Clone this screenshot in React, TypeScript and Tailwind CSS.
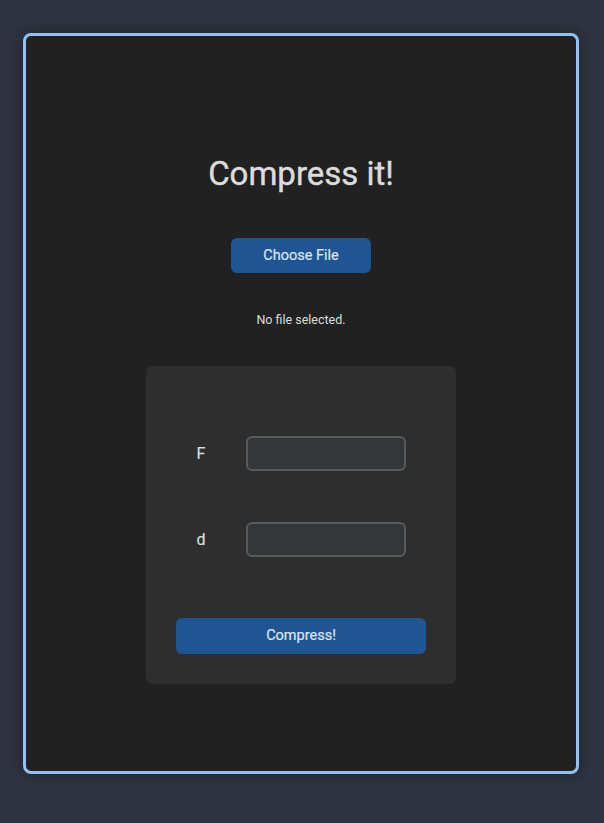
export default function App() {
  return (
    <div
      className="min-h-[823px] w-full bg-[#2e3440] pt-[33px] px-[23px]"
      style={{ fontFamily: 'Roboto, "Noto Sans", sans-serif' }}
    >
      <div className="h-[741px] w-[556px] rounded-[8px] border-[3px] border-[#93c1f0] bg-[#212121] shadow-[0_0_16px_rgba(0,0,0,0.35)] flex flex-col items-center">
        <h1 className="mt-[118px] text-[33px] leading-[40px] font-normal text-[#dcdcdc] [-webkit-text-stroke:0.4px_#dcdcdc]">
          Compress it!
        </h1>

        <button className="mt-[44px] h-[35px] w-[140px] rounded-[6px] bg-[#1f5592] text-[14.5px] text-[#dce4ee] [-webkit-text-stroke:0.2px_#dce4ee]">
          Choose File
        </button>

        <p className="mt-[38px] text-[12.5px] leading-[17px] text-[#dcdcdc]">No file selected.</p>

        <div className="mt-[38px] w-[310px] rounded-[6px] bg-[#2e2e2e] px-[30px] pt-[70px] pb-[30px]">
          <div className="flex items-center">
            <label className="w-[50px] text-center text-[16px] text-[#dcdcdc] [-webkit-text-stroke:0.2px_#dcdcdc]">F</label>
            <input className="ml-[20px] h-[35px] w-[160px] rounded-[6px] border-2 border-[#565b5e] bg-[#343638] outline-none" />
          </div>
          <div className="mt-[51px] flex items-center">
            <label className="w-[50px] text-center text-[16px] text-[#dcdcdc] [-webkit-text-stroke:0.2px_#dcdcdc]">d</label>
            <input className="ml-[20px] h-[35px] w-[160px] rounded-[6px] border-2 border-[#565b5e] bg-[#343638] outline-none" />
          </div>
          <button className="mt-[61px] h-[36px] w-[250px] rounded-[6px] bg-[#1f5592] text-[14.5px] text-[#dce4ee] [-webkit-text-stroke:0.2px_#dce4ee]">
            Compress!
          </button>
        </div>
      </div>
    </div>
  );
}
